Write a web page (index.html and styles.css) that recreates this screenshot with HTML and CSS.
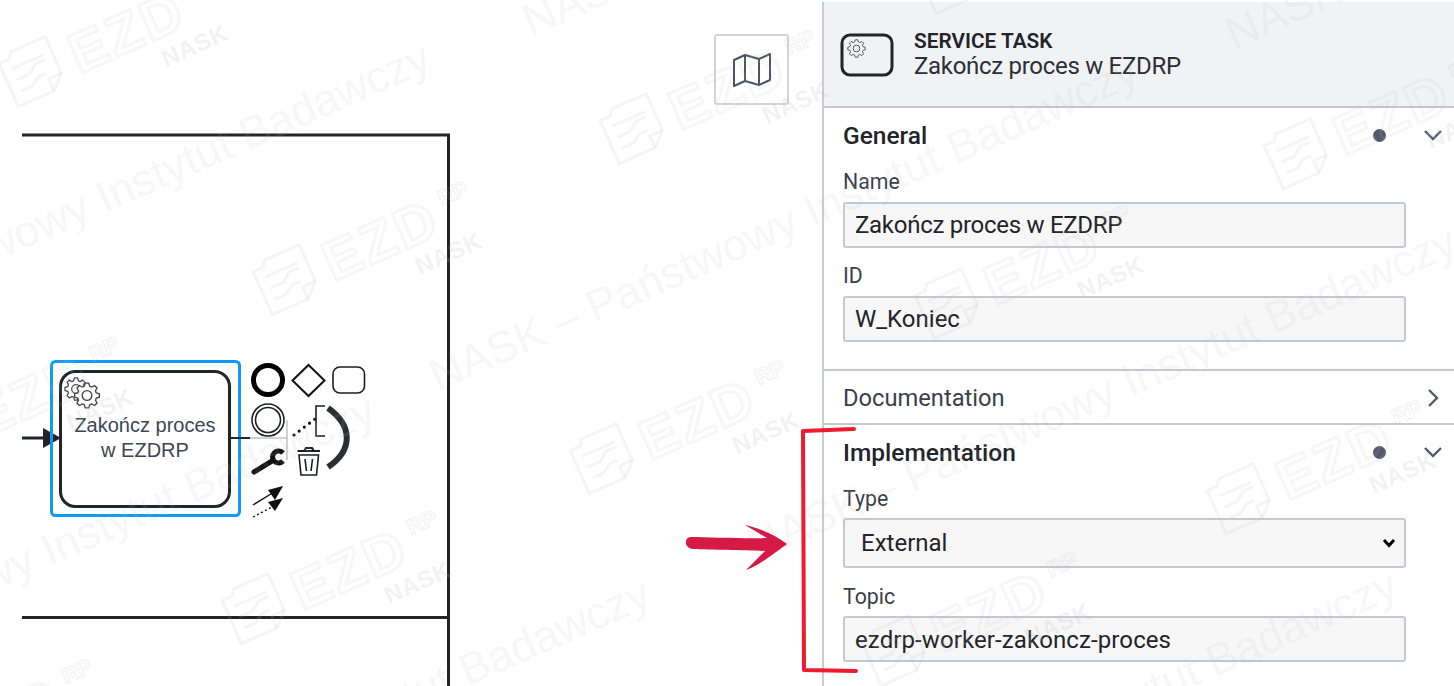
FILE: index.html
```html
<!DOCTYPE html>
<html lang="pl">
  <head>
    <meta charset="UTF-8" />
    <title>Service task</title>
    <link rel="stylesheet" href="styles.css">
  </head>
  <body>
    <svg class="defs" width="0" height="0">
      <symbol id="gear" viewBox="-14 -14 28 28" overflow="visible">
        <path d="M9.61-2.76 12.87-1.81 12.87 1.81 9.61 2.76 8.75 4.85 10.38 7.82 7.82 10.38 4.85 8.75 2.76 9.61 1.81 12.87-1.81 12.87-2.76 9.61-4.85 8.75-7.82 10.38-10.38 7.82-8.75 4.85-9.61 2.76-12.87 1.81-12.87-1.81-9.61-2.76-8.75-4.85-10.38-7.82-7.82-10.38-4.85-8.75-2.76-9.61-1.81-12.87 1.81-12.87 2.76-9.61 4.85-8.75 7.82-10.38 10.38-7.82 8.75-4.85Z" />
        <circle r="5" />
      </symbol>
      <symbol id="folder" viewBox="-32 -30 64 60" overflow="visible">
        <path d="M-27-20H-16L-12-26H26V14L12 27H-27Z" />
        <path d="M12 27V14H26" />
        <path d="M-18-10H17M-18 2H-4L6-5H17M-18 14H-6L4 8H12" />
      </symbol>
    </svg>

    <div class="page">
      <main class="canvas">
        <svg class="diagram" width="822" height="686" viewBox="0 0 822 686">
          <path class="pool" d="M22 135H448.500V686M22 617.500H448.500" />
          <path class="flow" d="M22 438H46" />
          <path class="flow-head" d="M43 428 61 438 43 448Z" />
          <rect class="selection" x="51.500" y="361.500" width="188" height="154" rx="4" />
          <rect class="task" x="60.500" y="371.500" width="169" height="135" rx="15" />
          <use class="gear" href="#gear" x="64" y="377" width="24" height="24" />
          <use class="gear" href="#gear" x="73.500" y="382" width="27" height="27" />
          <text class="task-label" x="145" y="432">Zakończ proces</text>
          <text class="task-label" x="145" y="457">w EZDRP</text>
          <path class="flow-out" d="M230 438H250" />
          <path class="flow-ghost" d="M250 438H287M287 420V460" />

          <circle class="pad-thick" cx="268" cy="380" r="14.500" />
          <path class="pad-line" d="M308.500 365 324.500 380.500 308.500 396 292.500 380.500Z" />
          <rect class="pad-thin" x="333" y="367" width="31.500" height="26" rx="7" />
          <circle class="pad-thin" cx="268" cy="420" r="16" />
          <circle class="pad-thin" cx="268" cy="420" r="12.500" />
          <path class="pad-dots" d="M294 435 315 419" />
          <path class="pad-thin" d="M325 406H316V436H325" />
          <path class="pad-arc" d="M328 408C353 426 353 450 328 467" />
          <path class="pad-wrench" d="M254 472 272 461" />
          <path class="pad-wrench-head" d="M283 453A6 6 0 1 0 283 461" />
          <path class="pad-lid" d="M297.500 451H320M304 451 306 448H312L314 451" />
          <path class="pad-thin" d="M299 455H318.500L316.500 475H301ZM305 459 306.500 471M312.500 459 311 471" />
          <path class="pad-arrow" d="M253 505 274 492" />
          <path class="pad-tip" d="M283 486 275 500 268 490Z" />
          <path class="pad-arrow-dots" d="M253 517 274 506" />
          <path class="pad-tip" d="M283 498 275 511 268 502Z" />
        </svg>

        <button class="map-btn" aria-label="Map">
          <svg width="40" height="36" viewBox="0 0 40 36">
            <path d="M2 8 13 3 27 7 38 2V28L27 33 13 29 2 34ZM13 3V29M27 7V33" />
          </svg>
        </button>
      </main>

      <aside class="panel">
        <header class="panel-head">
          <svg class="task-icon" width="54" height="44" viewBox="0 0 54 44">
            <rect x="2" y="2" width="50" height="40" rx="8" />
            <use class="gear-sm" href="#gear" x="7" y="6" width="19" height="19" />
          </svg>
          <div class="panel-title">
            <div class="panel-type">SERVICE TASK</div>
            <div class="panel-name">Zakończ proces w EZDRP</div>
          </div>
        </header>

        <section class="group">
          <div class="group-head">
            <span class="group-title open">General</span>
            <span class="dot"></span>
            <svg class="chev" width="22" height="14" viewBox="0 0 22 14"><path d="M3 3 11 11 19 3" /></svg>
          </div>
          <div class="fields">
            <div class="field">
              <label for="name">Name</label>
              <input id="name" type="text" value="Zakończ proces w EZDRP" />
            </div>
            <div class="field">
              <label for="id">ID</label>
              <input id="id" type="text" value="W_Koniec" />
            </div>
          </div>
        </section>

        <section class="group">
          <div class="group-head">
            <span class="group-title">Documentation</span>
            <svg class="chev" width="22" height="22" viewBox="0 0 22 22"><path d="M7 3 15 11 7 19" /></svg>
          </div>
        </section>

        <section class="group last">
          <div class="group-head">
            <span class="group-title open">Implementation</span>
            <span class="dot"></span>
            <svg class="chev" width="22" height="14" viewBox="0 0 22 14"><path d="M3 3 11 11 19 3" /></svg>
          </div>
          <div class="fields">
            <div class="field">
              <label for="type">Type</label>
              <select id="type"><option>External</option></select>
            </div>
            <div class="field">
              <label for="topic">Topic</label>
              <input id="topic" type="text" value="ezdrp-worker-zakoncz-proces" />
            </div>
          </div>
        </section>
      </aside>

      <!-- znak wodny -->
      <div class="watermark">
        <div class="wm-line t1">NASK – Państwowy Instytut Badawczy</div>
        <div class="wm-line t2">NASK – Państwowy Instytut Badawczy</div>
        <div class="wm-line t3">NASK – Państwowy Instytut Badawczy</div>
        <div class="wm-line t4">NASK – Państwowy Instytut Badawczy</div>
        <div class="wm-line t5">NASK – Państwowy Instytut Badawczy</div>
        <div class="wm-line t6">NASK – Państwowy Instytut Badawczy</div>
        <div class="wm-line t7">NASK – Państwowy Instytut Badawczy</div>
        <div class="wm-line t8">NASK – Państwowy Instytut Badawczy</div>

        <div class="logo l1"><svg width="64" height="60"><use href="#folder" /></svg><span class="ezd">EZD</span><span class="rp">RP</span><span class="nask">NASK</span></div>
        <div class="logo l2"><svg width="64" height="60"><use href="#folder" /></svg><span class="ezd">EZD</span><span class="rp">RP</span><span class="nask">NASK</span></div>
        <div class="logo l3"><svg width="64" height="60"><use href="#folder" /></svg><span class="ezd">EZD</span><span class="rp">RP</span><span class="nask">NASK</span></div>
        <div class="logo l4"><svg width="64" height="60"><use href="#folder" /></svg><span class="ezd">EZD</span><span class="rp">RP</span><span class="nask">NASK</span></div>
        <div class="logo l5"><svg width="64" height="60"><use href="#folder" /></svg><span class="ezd">EZD</span><span class="rp">RP</span><span class="nask">NASK</span></div>
        <div class="logo l6"><svg width="64" height="60"><use href="#folder" /></svg><span class="ezd">EZD</span><span class="rp">RP</span><span class="nask">NASK</span></div>
        <div class="logo l7"><svg width="64" height="60"><use href="#folder" /></svg><span class="ezd">EZD</span><span class="rp">RP</span><span class="nask">NASK</span></div>
        <div class="logo l8"><svg width="64" height="60"><use href="#folder" /></svg><span class="ezd">EZD</span><span class="rp">RP</span><span class="nask">NASK</span></div>
        <div class="logo l9"><svg width="64" height="60"><use href="#folder" /></svg><span class="ezd">EZD</span><span class="rp">RP</span><span class="nask">NASK</span></div>
        <div class="logo l10"><svg width="64" height="60"><use href="#folder" /></svg><span class="ezd">EZD</span><span class="rp">RP</span><span class="nask">NASK</span></div>
        <div class="logo l11"><svg width="64" height="60"><use href="#folder" /></svg><span class="ezd">EZD</span><span class="rp">RP</span><span class="nask">NASK</span></div>
        <div class="logo l12"><svg width="64" height="60"><use href="#folder" /></svg><span class="ezd">EZD</span><span class="rp">RP</span><span class="nask">NASK</span></div>
      </div>

      <!-- adnotacje na zrzucie -->
      <svg class="marks" width="1454" height="686" viewBox="0 0 1454 686">
        <path class="mark-bracket" d="M854 429 803 431 804 670 856 671" />
        <path class="mark-arrow" d="M690 537C710 537 745 539 767 538 760 534 752 529 745 525 758 528 775 534 787 544 776 552 757 567 746 570 754 562 760 556 765 551 745 550 710 550 693 549 684 548 684 538 690 537Z" />
      </svg>
    </div>
  </body>
</html>
```

FILE: styles.css
```css
body {
  margin: 0;
  background: #fff;
  color: #22242a;
  font-family: Roboto, "Noto Sans", sans-serif;
}
.defs {
  position: absolute;
}
.page {
  position: relative;
  display: grid;
  grid-template-columns: 822px 1fr;
  height: 686px;
  overflow: hidden;
}

/* canvas */
.canvas {
  position: relative;
}
.diagram {
  display: block;
}
.diagram path,
.diagram rect,
.diagram circle {
  fill: none;
}
.pool {
  stroke: #22242a;
  stroke-width: 3;
}
.flow {
  stroke: #22242a;
  stroke-width: 3;
}
.diagram .flow-head {
  fill: #22242a;
}
.selection {
  stroke: #0d9bf5;
  stroke-width: 3;
}
.task {
  stroke: #22242a;
  stroke-width: 3;
}
.gear {
  fill: #fff;
  stroke: #444;
  stroke-width: 1.4;
}
.task-label {
  fill: #3d4656;
  font-family: "Liberation Sans", Arial, sans-serif;
  font-size: 20px;
  text-anchor: middle;
}
.flow-out {
  stroke: #22242a;
  stroke-width: 2;
}
.flow-ghost {
  stroke: #c4c4c4;
  stroke-width: 1.5;
}
.pad-thick {
  stroke: #000;
  stroke-width: 5;
}
.pad-line {
  stroke: #111;
  stroke-width: 2;
}
.pad-thin {
  stroke: #1c1e24;
  stroke-width: 1.6;
}
.pad-dots {
  stroke: #111;
  stroke-width: 3.2;
  stroke-linecap: round;
  stroke-dasharray: 0 6.500;
}
.pad-arc {
  stroke: #2b2d33;
  stroke-width: 6;
}
.pad-wrench {
  stroke: #111;
  stroke-width: 5;
  stroke-linecap: round;
}
.pad-wrench-head {
  stroke: #111;
  stroke-width: 5;
}
.pad-lid {
  stroke: #1c1e24;
  stroke-width: 2;
}
.pad-arrow {
  stroke: #111;
  stroke-width: 1.400;
}
.pad-arrow-dots {
  stroke: #111;
  stroke-width: 1.400;
  stroke-dasharray: 2 2.500;
}
.diagram .pad-tip {
  fill: #111;
}
.map-btn {
  position: absolute;
  left: 714px;
  top: 34px;
  width: 75px;
  height: 71px;
  padding: 0;
  background: #fff;
  border: 2px solid #d4d4d4;
  border-radius: 3px;
}
.map-btn svg {
  display: block;
  margin: auto;
}
.map-btn path {
  fill: none;
  stroke: #4b5363;
  stroke-width: 2;
  stroke-linejoin: round;
}

/* properties panel */
.panel {
  margin-top: 2px;
  border-left: 2px solid #c9ccd6;
}
.panel-head {
  display: flex;
  align-items: center;
  gap: 20px;
  height: 106px;
  padding-left: 16px;
  padding-top: 1px;
  box-sizing: border-box;
  background: #f1f2f4;
  border-bottom: 2px solid #c5c8d1;
  margin-bottom: 1px;
}
.task-icon rect {
  fill: none;
  stroke: #22242a;
  stroke-width: 3;
}
.gear-sm {
  fill: none;
  stroke: #444;
  stroke-width: 1.300;
}
.panel-type {
  font-size: 20.800px;
  font-weight: 600;
  line-height: 23px;
}
.panel-name {
  font-size: 24px;
  line-height: 26px;
  letter-spacing: -0.300px;
  color: #2c2f37;
}
.group {
  border-bottom: 2px solid #c5c8d1;
}
.group.last {
  border-bottom: 0;
}
.group-head {
  display: flex;
  align-items: center;
  box-sizing: border-box;
  height: 52px;
  padding: 0 10px 0 19px;
}
.group + .group .group-head {
  padding-top: 2px;
}
.group-title {
  flex: 1;
  font-size: 23.700px;
  color: #3a3f4b;
}
.group-title.open {
  font-size: 24.500px;
  font-weight: 500;
  color: #22242a;
}
.dot {
  width: 13px;
  height: 13px;
  margin-right: 36px;
  background: #52596b;
  border-radius: 50%;
}
.chev path {
  fill: none;
  stroke: #52596b;
  stroke-width: 2.400;
}
.fields {
  display: flex;
  flex-direction: column;
  gap: 15px;
  padding: 8px 48px 27px 19px;
}
.field label {
  display: block;
  margin-bottom: 7px;
  font-size: 21.300px;
  line-height: 26px;
  color: #3a3f4b;
}
.last .field label {
  margin-bottom: 5px;
  line-height: 28px;
}
.field input,
.field select {
  display: block;
  width: 100%;
  box-sizing: border-box;
  height: 46px;
  padding: 0 10px;
  font-family: inherit;
  font-size: 24px;
  color: #22242a;
  background-color: #f7f7f8;
  border: 2px solid #c5c8d1;
  border-radius: 3px;
}
#name {
  letter-spacing: -0.280px;
}
#topic {
  padding-top: 2px;
  letter-spacing: 0.100px;
}
.field select {
  height: 50px;
  padding: 0 16px;
  appearance: none;
  background-image: url("data:image/svg+xml,%3Csvg xmlns='http://www.w3.org/2000/svg' width='14' height='10' viewBox='0 0 14 10'%3E%3Cpath d='M2 2 7 7.500 12 2' fill='none' stroke='%23000' stroke-width='3'/%3E%3C/svg%3E");
  background-repeat: no-repeat;
  background-position: right 8px center;
}

/* watermark */
.watermark {
  position: absolute;
  left: 0;
  top: 0;
  width: 100%;
  height: 100%;
  overflow: hidden;
  pointer-events: none;
  filter: blur(0.500px);
}
.wm-line {
  position: absolute;
  white-space: nowrap;
  line-height: 0;
  font-family: "Liberation Sans", sans-serif;
  font-size: 44.600px;
  color: rgba(190, 190, 190, 0.12);
  transform: rotate(-23.7deg);
  transform-origin: 0 0;
}
.t1 { left: 432px; top: 378px; }
.t2 { left: 750px; top: 548px; }
.t3 { left: 691px; top: 891px; }
.t4 { left: -56px; top: 900px; }
.t5 { left: -331px; top: 717px; }
.t6 { left: -276px; top: 364px; }
.t7 { left: 525px; top: 23px; }
.t8 { left: 1228px; top: 36px; }

.logo {
  position: absolute;
  width: 1px;
  height: 1px;
  transform: rotate(-24deg);
  transform-origin: 0 0;
}
.logo svg {
  position: absolute;
  left: -32px;
  top: -30px;
  fill: none;
  stroke: rgba(190, 190, 190, 0.15);
  stroke-width: 3;
}
.logo span {
  position: absolute;
  white-space: nowrap;
  line-height: 0;
  font-family: "Liberation Sans", sans-serif;
  font-weight: 700;
}
.ezd {
  left: 42px;
  top: 3px;
  font-size: 56px;
  letter-spacing: 3px;
  color: transparent;
  -webkit-text-stroke: 3px rgba(190, 190, 190, 0.13);
}
.rp {
  left: 172px;
  top: -10px;
  font-size: 22px;
  color: transparent;
  -webkit-text-stroke: 1.500px rgba(190, 190, 190, 0.17);
}
.nask {
  left: 124px;
  top: 43px;
  font-size: 24px;
  letter-spacing: 0.500px;
  color: rgba(190, 190, 190, 0.2);
}
.l1 { left: 32px; top: 71px; }
.l2 { left: 286px; top: 279px; }
.l3 { left: 633px; top: 128px; }
.l4 { left: 603px; top: 458px; }
.l5 { left: 255px; top: 608px; }
.l6 { left: 1297px; top: 153px; }
.l7 { left: 948px; top: 303px; }
.l8 { left: 1240px; top: 498px; }
.l9 { left: 895px; top: 650px; }
.l10 { left: -63px; top: 435px; }
.l11 { left: -90px; top: 757px; }
.l12 { left: 950px; top: -22px; }

/* annotations */
.marks {
  position: absolute;
  left: 0;
  top: 0;
  pointer-events: none;
}
.mark-bracket {
  fill: none;
  stroke: #ee1c2e;
  stroke-width: 4;
  stroke-linecap: round;
  stroke-linejoin: round;
}
.mark-arrow {
  fill: #d51a45;
}
```
